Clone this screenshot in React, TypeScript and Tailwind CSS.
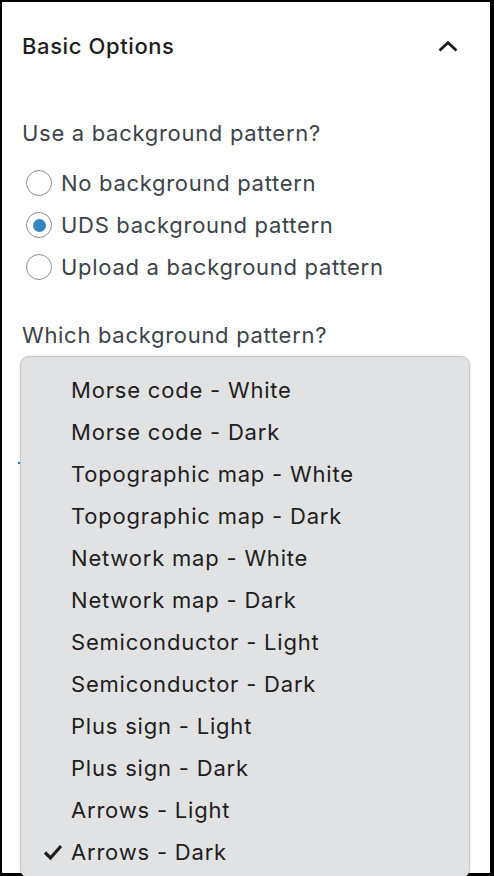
import React from "react";

const patterns = [
  "Morse code - White",
  "Morse code - Dark",
  "Topographic map - White",
  "Topographic map - Dark",
  "Network map - White",
  "Network map - Dark",
  "Semiconductor - Light",
  "Semiconductor - Dark",
  "Plus sign - Light",
  "Plus sign - Dark",
  "Arrows - Light",
  "Arrows - Dark",
];

const radios = [
  { label: "No background pattern", checked: false },
  { label: "UDS background pattern", checked: true },
  { label: "Upload a background pattern", checked: false },
];

const Radio = ({ checked }: { checked: boolean }) => (
  <span className="flex h-[26px] w-[26px] shrink-0 items-center justify-center rounded-full border border-[#8c8f94] bg-white">
    {checked && <span className="h-[13px] w-[13px] rounded-full bg-[#3582c4]" />}
  </span>
);

const App = () => {
  return (
    <div
      className="relative h-[876px] w-[494px] border-b-[3px] border-l-2 border-r-4 border-t-2 border-black bg-white"
      style={{ fontFamily: "Inter, 'Noto Sans', sans-serif" }}
    >
      {/* panel header */}
      <div className="flex h-[88px] items-center justify-between pl-[20px] pr-[30px]">
        <h2 className="text-[22px] font-medium tracking-[0.6px] text-[#1e1e1e]">Basic Options</h2>
        <svg width="24" height="24" viewBox="0 0 24 24" className="text-[#1e1e1e]">
          <path d="M3.5 16.5 12 8.6l8.5 7.9" fill="none" stroke="currentColor" strokeWidth="2.8" />
        </svg>
      </div>

      <div className="pl-[16px] pt-[22px] text-[22px] tracking-[0.7px] text-[#3c434a]">
        <div className="flex h-[42px] items-center pl-[4px]">Use a background pattern?</div>

        <div className="mt-[8px] flex flex-col">
          {radios.map((r) => (
            <label key={r.label} className="flex h-[42px] items-center gap-[9px] pl-[8px]">
              <Radio checked={r.checked} />
              <span>{r.label}</span>
            </label>
          ))}
        </div>

        <div className="mt-[26px] flex h-[42px] items-center pl-[4px]">Which background pattern?</div>

        {/* select underneath the open menu */}
        <div className="mr-[22px] h-[108px] border-b-2 border-[#2271b1]" />
      </div>

      {/* open select menu */}
      <div className="absolute left-[18px] top-[354px] z-10 h-[522px] w-[450px] rounded-[9px] border border-[#c9c9cb] bg-[#e1e2e4] pt-[12px] shadow-[0_0_3px_rgba(0,0,0,0.12)]">
        {patterns.map((p, i) => (
          <div key={p} className="flex h-[42px] items-center text-[22px] tracking-[0.8px] text-[#1e1e1e]">
            <span className="flex w-[50px] justify-end pr-[7px]">
              {i === patterns.length - 1 && (
                <svg width="22" height="22" viewBox="0 0 22 22">
                  <path d="M3 11.5 8.5 17 19 5" fill="none" stroke="#1e1e1e" strokeWidth="3.2" />
                </svg>
              )}
            </span>
            <span>{p}</span>
          </div>
        ))}
      </div>
    </div>
  );
};

export default App;
